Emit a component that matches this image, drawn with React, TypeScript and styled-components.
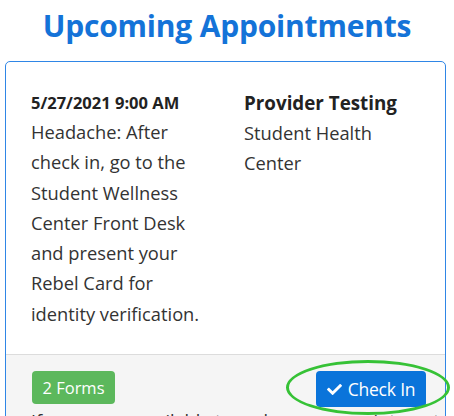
import React from "react";
import styled, { createGlobalStyle } from "styled-components";
import { FaCheck } from "react-icons/fa";

const GlobalStyle = createGlobalStyle`
  html, body {
    margin: 0;
    padding: 0;
    background: #fff;
  }
  body {
    font-family: "Open Sans", "Noto Sans", sans-serif;
    color: #333;
  }
`;

export default function App() {
  return (
    <>
      <GlobalStyle />
      <Page>
        <Title>Upcoming Appointments</Title>
        <Card>
          <CardBody>
            <Column>
              <DateLine>5/27/2021 9:00 AM</DateLine>
              <Text>
                Headache: After check in, go to the Student Wellness Center
                Front Desk and present your Rebel Card for identity
                verification.
              </Text>
            </Column>
            <Column>
              <Provider>Provider Testing</Provider>
              <Text>Student Health Center</Text>
            </Column>
          </CardBody>
          <Footer>
            <FooterRow>
              <Badge>2 Forms</Badge>
              <CheckInButton>
                <FaCheck size={15} />
                Check In
              </CheckInButton>
            </FooterRow>
            <Note>
              If you are unavailable to make your appointment, please call
            </Note>
            <Highlight />
          </Footer>
        </Card>
      </Page>
    </>
  );
}

const Page = styled.div`
  display: flex;
  flex-direction: column;
  height: 416px;
  overflow: hidden;
`;

const Title = styled.h2`
  margin: 6px 0 0;
  text-align: center;
  font-size: 30px;
  line-height: 40px;
  font-weight: 700;
  color: #1473d8;
  letter-spacing: -0.2px;
`;

const Card = styled.div`
  margin: 15px 8px 0 5px;
  border: 1px solid #2f86e6;
  border-radius: 5px;
  background: #fff;
`;

const CardBody = styled.div`
  display: grid;
  grid-template-columns: 183px 183px;
  column-gap: 30px;
  padding: 26px 20px 20px 25px;
  height: 246px;
`;

const Column = styled.div`
  display: flex;
  flex-direction: column;
`;

const DateLine = styled.div`
  font-size: 16.5px;
  font-weight: 700;
  line-height: 29px;
  color: #222;
`;

const Provider = styled.div`
  font-size: 18.8px;
  font-weight: 700;
  line-height: 30px;
  color: #222;
`;

const Text = styled.p`
  margin: 0;
  font-size: 18.3px;
  line-height: 30.3px;
  color: #333;
`;

const Footer = styled.div`
  position: relative;
  border-top: 1px solid #dcdcdc;
  background: #f5f5f5;
  padding: 16px 19px 0 25px;
`;

const FooterRow = styled.div`
  display: flex;
  justify-content: space-between;
  align-items: flex-start;
`;

const Badge = styled.span`
  display: inline-flex;
  align-items: center;
  justify-content: center;
  width: 83px;
  height: 33px;
  border-radius: 4px;
  background: #5cb85c;
  color: #fff;
  font-size: 16.5px;
  margin-left: 1px;
`;

const CheckInButton = styled.button`
  display: inline-flex;
  align-items: center;
  justify-content: center;
  gap: 6px;
  width: 110px;
  height: 36px;
  border: none;
  border-radius: 4px;
  background: #0a74da;
  color: #fff;
  font-family: "Open Sans", "Noto Sans", sans-serif;
  font-size: 17.5px;
  letter-spacing: -0.2px;
  padding: 0;
`;

const Note = styled.p`
  margin: 2px 0 0;
  font-size: 18px;
  line-height: 24px;
  color: #333;
  white-space: nowrap;
`;

const Highlight = styled.div`
  position: absolute;
  top: 5px;
  left: 280px;
  width: 158px;
  height: 49px;
  border: 3px solid #36c236;
  border-radius: 50%;
  pointer-events: none;
`;
